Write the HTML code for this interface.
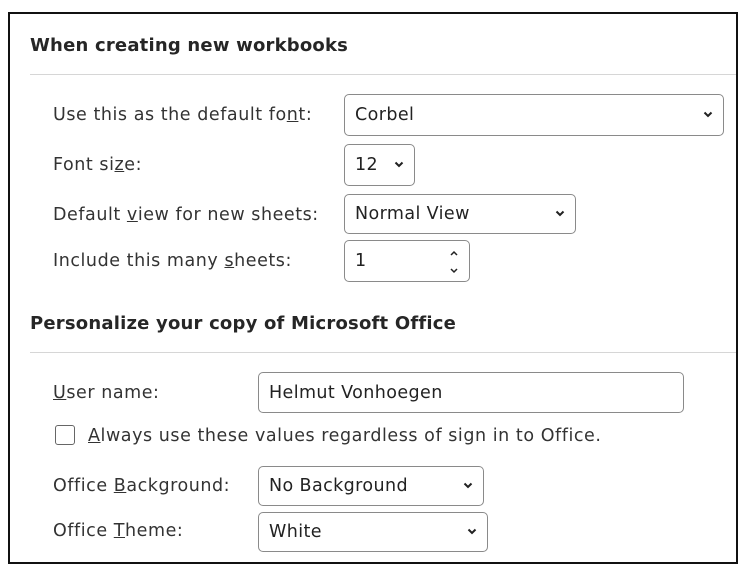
<!DOCTYPE html>
<html><head><style>
body{margin:0;width:747px;height:572px;background:#fff;font-family:"DejaVu Sans","Liberation Sans",sans-serif;color:#222;position:relative;overflow:hidden}
.frame{position:absolute;left:8px;top:12px;width:726px;height:548px;border:2px solid #111}
.a{position:absolute;white-space:nowrap}
.h{font-weight:bold;font-size:18px;color:#262626;letter-spacing:0.2px}
.l{font-size:17.5px;color:#333;letter-spacing:0.55px}
.box{position:absolute;border:1px solid #8a8a8a;border-radius:5px;background:#fff;font-size:17.5px;letter-spacing:0.4px;color:#222;box-sizing:border-box;padding-left:10px;display:flex;align-items:center}
.chev{position:absolute;right:10px;top:50%;margin-top:-4px}
.line{position:absolute;height:1px;background:#d6d6d6}
u{text-decoration:underline}
</style></head><body>
<div class="frame"></div>
<div class="a h" style="left:30px;top:35px">When creating new workbooks</div>
<div class="line" style="left:30px;top:74px;width:706px"></div>
<div class="a l" style="left:53px;top:105px">Use this as the default fo<u>n</u>t:</div>
<div class="box" style="left:344px;top:94px;width:380px;height:42px">Corbel<svg class="chev" width="10" height="7" viewBox="0 0 10 7"><path d="M1.5 1.5L5 5L8.5 1.5" stroke="#222" stroke-width="2" fill="none"/></svg></div>
<div class="a l" style="left:53px;top:155px">Font si<u>z</u>e:</div>
<div class="box" style="left:344px;top:144px;width:71px;height:42px">12<svg class="chev" width="10" height="7" viewBox="0 0 10 7"><path d="M1.5 1.5L5 5L8.5 1.5" stroke="#222" stroke-width="2" fill="none"/></svg></div>
<div class="a l" style="left:53px;top:205px">Default <u>v</u>iew for new sheets:</div>
<div class="box" style="left:344px;top:194px;width:232px;height:40px">Normal View<svg class="chev" width="10" height="7" viewBox="0 0 10 7"><path d="M1.5 1.5L5 5L8.5 1.5" stroke="#222" stroke-width="2" fill="none"/></svg></div>
<div class="a l" style="left:53px;top:251px">Include this many <u>s</u>heets:</div>
<div class="box" style="left:344px;top:240px;width:126px;height:42px">1
<svg style="position:absolute;right:10px;top:8px" width="10" height="26" viewBox="0 0 10 26"><path d="M2 6L5 3L8 6M2 20L5 23L8 20" stroke="#222" stroke-width="1.5" fill="none"/></svg></div>
<div class="a h" style="left:30px;top:313px">Personalize your copy of Microsoft Office</div>
<div class="line" style="left:30px;top:352px;width:706px"></div>
<div class="a l" style="left:53px;top:383px"><u>U</u>ser name:</div>
<div class="box" style="left:258px;top:372px;width:426px;height:41px">Helmut Vonhoegen</div>
<div style="position:absolute;left:55px;top:425px;width:18px;height:18px;border:1.5px solid #666;border-radius:3px"></div>
<div class="a l" style="left:88px;top:426px"><u>A</u>lways use these values regardless of sign in to Office.</div>
<div class="a l" style="left:53px;top:476px">Office <u>B</u>ackground:</div>
<div class="box" style="left:258px;top:466px;width:226px;height:40px">No Background<svg class="chev" width="10" height="7" viewBox="0 0 10 7"><path d="M1.5 1.5L5 5L8.5 1.5" stroke="#222" stroke-width="2" fill="none"/></svg></div>
<div class="a l" style="left:53px;top:521px">Office <u>T</u>heme:</div>
<div class="box" style="left:258px;top:512px;width:230px;height:40px">White<svg class="chev" width="10" height="7" viewBox="0 0 10 7"><path d="M1.5 1.5L5 5L8.5 1.5" stroke="#222" stroke-width="2" fill="none"/></svg></div>
</body></html>
